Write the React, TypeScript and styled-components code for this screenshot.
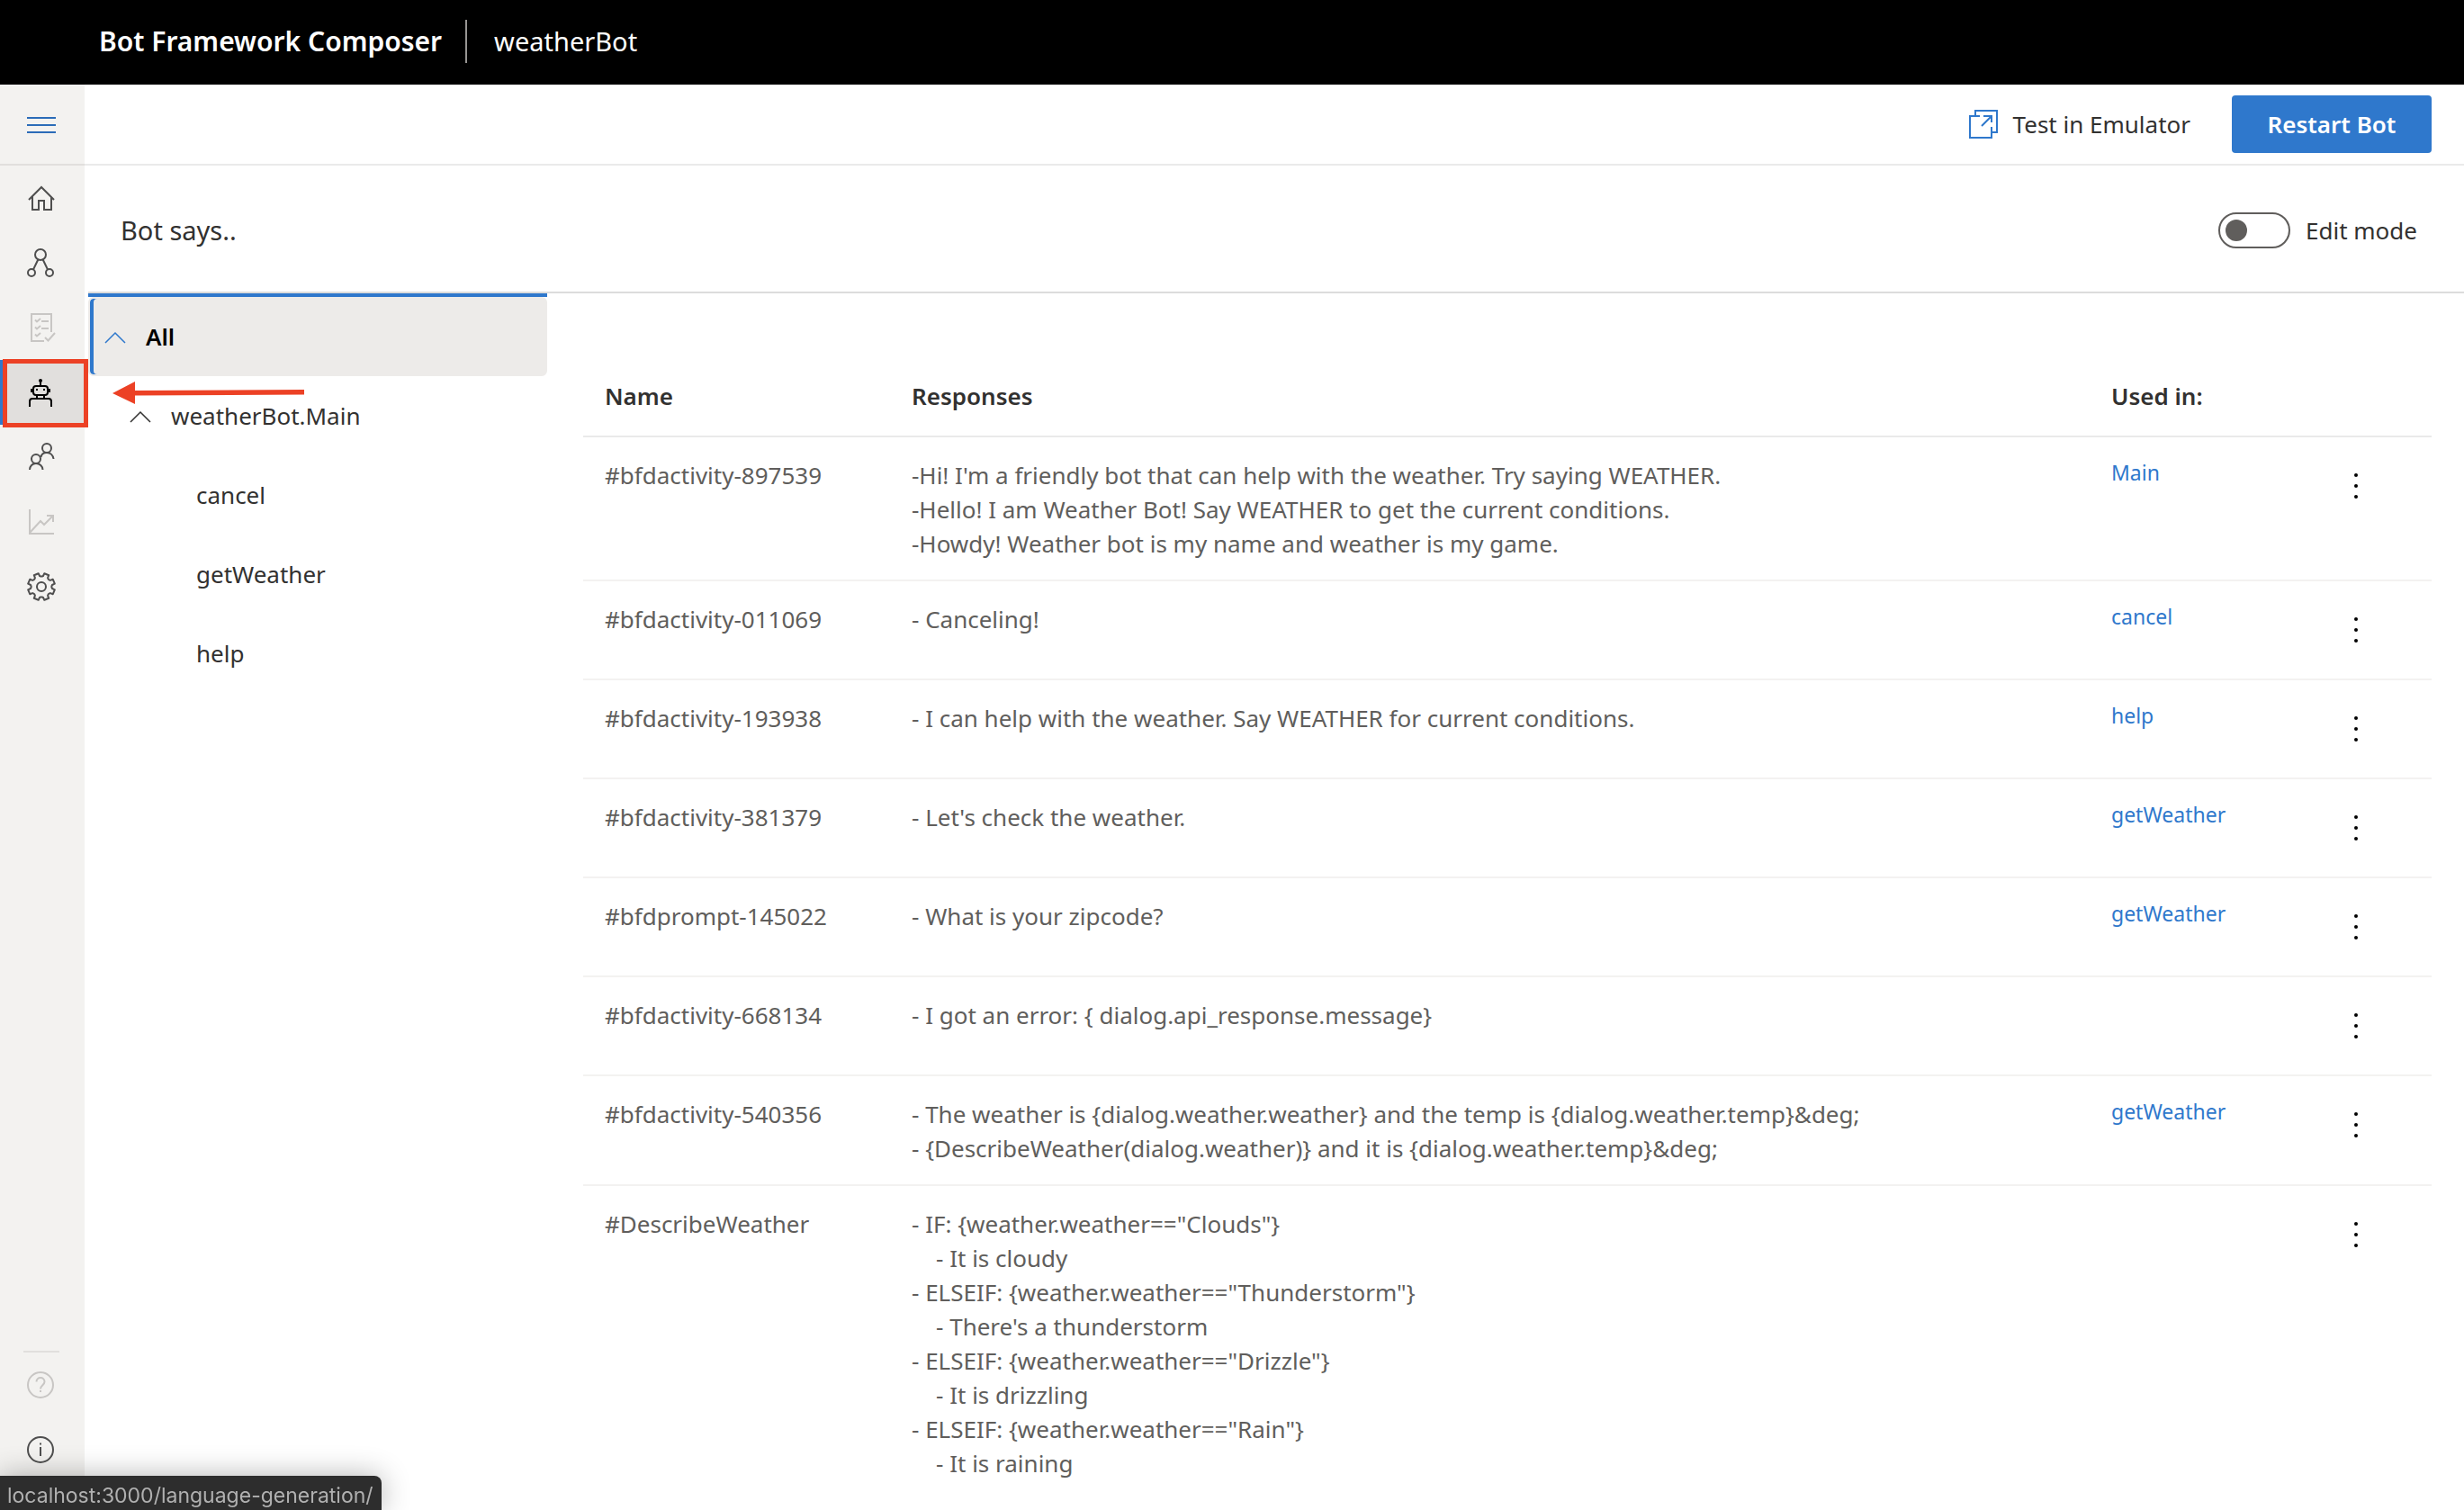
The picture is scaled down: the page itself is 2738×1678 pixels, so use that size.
import React, { useState } from "react";
import styled, { createGlobalStyle, css } from "styled-components";

const color = {
  blue: "#2f78cc",
  text: "#323130",
  muted: "#605e5c",
  disabled: "#c8c6c4",
  icon: "#4f4f4f",
  line: "#eaeaea",
  rail: "#f3f2f0",
  mark: "#ec4125",
};

const GlobalStyle = createGlobalStyle`
  * { box-sizing: border-box; }
  body {
    margin: 0;
    background: #fff;
    color: ${color.text};
    font-family: "Noto Sans", "Open Sans", sans-serif;
    font-size: 26px;
    line-height: 38px;
  }
  button { font: inherit; color: inherit; border: 0; background: none; padding: 0; cursor: pointer; }
  a { color: inherit; text-decoration: none; }
`;

const Page = styled.div`
  display: flex;
  flex-direction: column;
  height: 100vh;
  overflow: hidden;
`;

const TopBar = styled.header`
  flex: none;
  display: flex;
  align-items: center;
  height: 94px;
  padding: 0 0 2px 110px;
  background: #000;
  color: #fff;
  font-size: 29px;
`;

const Product = styled.span`
  font-size: 30px;
  font-weight: 600;
`;

const TopDivider = styled.span`
  width: 2px;
  height: 48px;
  margin: 0 30px 0 26px;
  background: #979593;
`;

const Body = styled.div`
  flex: 1;
  display: flex;
  min-height: 0;
`;

const Rail = styled.nav`
  position: relative;
  z-index: 1;
  flex: none;
  display: flex;
  flex-direction: column;
  width: 94px;
  padding-bottom: 31px;
  background: ${color.rail};
`;

const MenuButton = styled.button`
  flex: none;
  height: 90px;
  padding-left: 30px;
  border-bottom: 2px solid #e1dfdd;
  color: #2b6cb8;
  text-align: left;
`;

const RailGroup = styled.div`
  display: flex;
  flex-direction: column;
`;

const RailBottom = styled(RailGroup)`
  margin-top: auto;
`;

const RailRule = styled.hr`
  width: 40px;
  height: 2px;
  margin: 0 0 0 26px;
  border: 0;
  background: #e1dfdd;
`;

const RailLink = styled.a<{ $active?: boolean; $disabled?: boolean }>`
  position: relative;
  display: flex;
  align-items: center;
  height: 72px;
  padding-left: 30px;
  color: ${(p) => (p.$active ? "#000" : p.$disabled ? color.disabled : color.icon)};
  ${(p) =>
    p.$active &&
    css`
      background: #e1dfdd;
      box-shadow: inset 4px 0 0 ${color.blue};
    `}
`;

const Highlight = styled.span`
  position: absolute;
  top: -1px;
  left: 3px;
  width: 95px;
  height: 76px;
  border: 5px solid ${color.mark};
`;

const Pointer = styled.svg`
  position: absolute;
  top: 24px;
  left: 125px;
`;

const Icon = styled.svg`
  display: block;
  flex: none;
  fill: none;
  stroke: currentColor;
  stroke-width: 2;
`;

const Main = styled.main`
  flex: 1;
  display: flex;
  flex-direction: column;
  min-width: 0;
  padding-bottom: 23px;
`;

const Toolbar = styled.div`
  flex: none;
  display: flex;
  align-items: center;
  justify-content: flex-end;
  gap: 46px;
  height: 90px;
  padding-right: 36px;
  border-bottom: 2px solid ${color.line};
`;

const EmulatorButton = styled.button`
  display: flex;
  align-items: center;
  gap: 16px;
`;

const BlueIcon = styled(Icon)`
  color: ${color.blue};
`;

const PrimaryButton = styled.button`
  width: 222px;
  height: 64px;
  border-radius: 4px;
  background: ${color.blue};
  color: #fff;
  font-weight: 600;
`;

const TitleRow = styled.div`
  flex: none;
  display: flex;
  align-items: center;
  justify-content: space-between;
  height: 142px;
  margin-left: 4px;
  padding: 4px 52px 0 36px;
  border-bottom: 2px solid #dcdcdc;
`;

const Title = styled.h1`
  margin: 0;
  font-size: 29px;
  font-weight: 400;
`;

const ToggleLabel = styled.label`
  display: flex;
  align-items: center;
  gap: 17px;
`;

const Toggle = styled.input`
  appearance: none;
  display: flex;
  align-items: center;
  width: 80px;
  height: 40px;
  margin: 0;
  padding: 0 6px;
  border: 2px solid ${color.muted};
  border-radius: 20px;
  &::before {
    content: "";
    width: 24px;
    height: 24px;
    border-radius: 50%;
    background: ${color.muted};
  }
  &:checked { justify-content: flex-end; }
`;

const Split = styled.div`
  flex: 1;
  display: flex;
  min-height: 0;
`;

const Tree = styled.div`
  flex: none;
  width: 510px;
  margin-left: 4px;
  border-top: 4px solid ${color.blue};
`;

const TreeRow = styled.button<{ $level: number; $selected?: boolean }>`
  display: flex;
  align-items: center;
  gap: 22px;
  width: 100%;
  height: 88px;
  padding-left: ${(p) => 18 + p.$level * 28}px;
  text-align: left;
  ${(p) =>
    p.$selected &&
    css`
      border: 2px solid #edebe9;
      border-radius: 6px;
      padding-left: 16px;
      background: #edebe9;
      box-shadow: inset 4px 0 0 ${color.blue};
      font-weight: 600;
      color: #000;
    `}
`;

const ChevronSlot = styled.span<{ $blue?: boolean }>`
  flex: none;
  width: 24px;
  padding-top: 2px;
  color: ${(p) => (p.$blue ? color.blue : color.text)};
`;

const Content = styled.div`
  flex: 1;
  min-width: 0;
  margin: 0 36px 0 40px;
  overflow: auto;
  scrollbar-width: none;
`;

const Table = styled.table`
  width: 100%;
  margin-top: 70px;
  table-layout: fixed;
  border-collapse: separate;
  border-spacing: 0;
`;

const HeadCell = styled.th<{ $width?: number }>`
  width: ${(p) => (p.$width ? `${p.$width}px` : "auto")};
  height: 90px;
  padding: 0 24px;
  border-bottom: 2px solid ${color.line};
  text-align: left;
  font-weight: 600;
`;

const Cell = styled.td`
  height: 110px;
  padding: 23px 24px 21px;
  border-bottom: 2px solid #f3f2f1;
  vertical-align: top;
  color: ${color.muted};
  white-space: pre;
`;

const UsedCell = styled(Cell)`
  padding: 20px 24px;
  color: ${color.blue};
  font-size: 23px;
`;

const ActionCell = styled(Cell)`
  padding: 34px 24px 0;
`;

const MoreButton = styled.button`
  display: flex;
  align-items: center;
  justify-content: center;
  width: 40px;
  height: 40px;
  margin: 0 auto;
  color: #000;
`;

const LinkPreview = styled.div`
  position: fixed;
  left: 0;
  bottom: 0;
  z-index: 2;
  width: 424px;
  height: 38px;
  padding: 3px 8px 0;
  border-top-right-radius: 8px;
  background: #2d2d2d;
  box-shadow: 0 0 32px rgba(0, 0, 0, 0.3);
  color: #b0b0b0;
  font-family: Inter, Roboto, sans-serif;
  font-size: 23px;
  white-space: nowrap;
`;

const gearPath = (() => {
  const at = (radius: number, degrees: number) => {
    const a = (degrees * Math.PI) / 180;
    return `${(16 + radius * Math.cos(a)).toFixed(1)} ${(16 + radius * Math.sin(a)).toFixed(1)}`;
  };
  const points: string[] = [];
  for (let i = 0; i < 8; i++) {
    const c = 22.5 + i * 45;
    points.push(at(11.4, c - 19), at(12.2, c - 13), at(15.2, c - 10), at(15.2, c + 10), at(12.2, c + 13), at(11.4, c + 19));
  }
  return `M${points.join("L")}Z`;
})();

const icons = {
  menu: <path d="M0 9h32M0 17h32M0 25h32" />,
  home: <path d="M2 18 16 4l14 14M6 14.500V29h7V19h6v10h8V14.500" />,
  design: (
    <>
      <circle cx="15" cy="7" r="6" />
      <circle cx="5" cy="27" r="4" />
      <circle cx="25" cy="27" r="4" />
      <path d="M12.300 12.500 7 23.500M17.700 12.500 23 23.500" />
    </>
  ),
  notes: <path d="M27 21V1H5v30h14M20 27l3.500 3.500L31 22M9 7.500l2 2 4-3.500M9 15.500l2 2 4-3.500M9 23.500l2 2 4-3.500M16 9h8M16 17h8" />,
  bot: (
    <>
      <circle cx="15" cy="3" r="2" fill="currentColor" stroke="none" />
      <path d="M15 4v5M5 12v4M25 12v4M11 19v4M19 19v4M3 32v-6q0-3 3-3h18q3 0 3 3v6" />
      <rect x="7" y="9" width="16" height="10" rx="3" />
      <path d="M10 13h2M18 13h2" />
    </>
  ),
  users: (
    <>
      <circle cx="22" cy="6" r="5" />
      <circle cx="10" cy="18" r="5" />
      <path d="M3 30c0-4 3-7 7-7s7.500 3 7.500 7M15.500 16c.5-3 3-5 6.500-5 4 0 7 3 7.500 7" />
    </>
  ),
  chart: <path d="M3 2v27h27M3 28l12-13 4 4 10-10M22 9h7v7" />,
  gear: (
    <>
      <path d={gearPath} strokeLinejoin="round" />
      <circle cx="16" cy="16" r="5" />
    </>
  ),
  help: (
    <>
      <circle cx="15" cy="16" r="14" />
      <path d="M10.500 12.500c0-6 9-6 9 0 0 3.500-4.500 4-4.500 8M15 22v2" />
    </>
  ),
  info: (
    <>
      <circle cx="15" cy="16" r="14" />
      <path d="M15 8.500v2M15 13v10" />
    </>
  ),
};

type IconName = keyof typeof icons;

const Glyph = ({ name }: { name: IconName }) => (
  <Icon width="32" height="32" viewBox="0 0 32 32" aria-hidden="true">
    {icons[name]}
  </Icon>
);

const Chevron = () => (
  <Icon width="24" height="14" viewBox="0 0 24 14" aria-hidden="true">
    <path d="M1 13 12 2l11 11" strokeWidth="1.5" />
  </Icon>
);

const navItems: { icon: IconName; label: string; active?: boolean; disabled?: boolean }[] = [
  { icon: "home", label: "Home" },
  { icon: "design", label: "Design flow" },
  { icon: "notes", label: "Test cases", disabled: true },
  { icon: "bot", label: "Bot says", active: true },
  { icon: "users", label: "User says" },
  { icon: "chart", label: "Analytics", disabled: true },
  { icon: "gear", label: "Settings" },
];

const treeItems = [
  { label: "All", level: 0, open: true, selected: true },
  { label: "weatherBot.Main", level: 1, open: true },
  { label: "cancel", level: 2 },
  { label: "getWeather", level: 2 },
  { label: "help", level: 2 },
];

const rows = [
  {
    name: "#bfdactivity-897539",
    text: `-Hi! I'm a friendly bot that can help with the weather. Try saying WEATHER.
-Hello! I am Weather Bot! Say WEATHER to get the current conditions.
-Howdy! Weather bot is my name and weather is my game.`,
    used: "Main",
  },
  { name: "#bfdactivity-011069", text: "- Canceling!", used: "cancel" },
  { name: "#bfdactivity-193938", text: "- I can help with the weather. Say WEATHER for current conditions.", used: "help" },
  { name: "#bfdactivity-381379", text: "- Let's check the weather.", used: "getWeather" },
  { name: "#bfdprompt-145022", text: "- What is your zipcode?", used: "getWeather" },
  { name: "#bfdactivity-668134", text: "- I got an error: { dialog.api_response.message}", used: "" },
  {
    name: "#bfdactivity-540356",
    text: `- The weather is {dialog.weather.weather} and the temp is {dialog.weather.temp}&deg;
- {DescribeWeather(dialog.weather)} and it is {dialog.weather.temp}&deg;`,
    used: "getWeather",
  },
  {
    name: "#DescribeWeather",
    text: `- IF: {weather.weather=="Clouds"}
    - It is cloudy
- ELSEIF: {weather.weather=="Thunderstorm"}
    - There's a thunderstorm
- ELSEIF: {weather.weather=="Drizzle"}
    - It is drizzling
- ELSEIF: {weather.weather=="Rain"}
    - It is raining
- ELSEIF: {weather.weather=="Snow"}`,
    used: "",
  },
];

export default function App() {
  const [editMode, setEditMode] = useState(false);
  return (
    <Page>
      <GlobalStyle />
      <TopBar>
        <Product>Bot Framework Composer</Product>
        <TopDivider />
        <span>weatherBot</span>
      </TopBar>
      <Body>
        <Rail>
          <MenuButton aria-label="Toggle menu">
            <Glyph name="menu" />
          </MenuButton>
          <RailGroup>
            {navItems.map((item) => (
              <RailLink key={item.icon} href="#" aria-label={item.label} $active={item.active} $disabled={item.disabled}>
                <Glyph name={item.icon} />
                {item.active && (
                  <>
                    <Highlight />
                    <Pointer width="214" height="26" viewBox="0 0 214 26" fill={color.mark} aria-hidden="true">
                      <path d="M0 13 25 0v10l188-1v5.500L25 15.500V25Z" />
                    </Pointer>
                  </>
                )}
              </RailLink>
            ))}
          </RailGroup>
          <RailBottom>
            <RailRule />
            <RailLink href="#" aria-label="Help" $disabled>
              <Glyph name="help" />
            </RailLink>
            <RailLink href="#" aria-label="About">
              <Glyph name="info" />
            </RailLink>
          </RailBottom>
        </Rail>
        <Main>
          <Toolbar>
            <EmulatorButton>
              <BlueIcon width="34" height="32" viewBox="0 0 34 32" aria-hidden="true">
                <path d="M8 6V1h24v24h-5M13 7H2v24h24V19M26 14V7h-9M26 7 15 18" />
              </BlueIcon>
              Test in Emulator
            </EmulatorButton>
            <PrimaryButton>Restart Bot</PrimaryButton>
          </Toolbar>
          <TitleRow>
            <Title>Bot says..</Title>
            <ToggleLabel>
              <Toggle type="checkbox" role="switch" checked={editMode} onChange={(e) => setEditMode(e.target.checked)} />
              Edit mode
            </ToggleLabel>
          </TitleRow>
          <Split>
            <Tree>
              {treeItems.map((item) => (
                <TreeRow key={item.label} $level={item.level} $selected={item.selected}>
                  <ChevronSlot $blue={item.selected}>{item.open && <Chevron />}</ChevronSlot>
                  {item.label}
                </TreeRow>
              ))}
            </Tree>
            <Content>
              <Table>
                <thead>
                  <tr>
                    <HeadCell $width={341}>Name</HeadCell>
                    <HeadCell>Responses</HeadCell>
                    <HeadCell $width={212}>Used in:</HeadCell>
                    <HeadCell $width={168} aria-label="Actions" />
                  </tr>
                </thead>
                <tbody>
                  {rows.map((row) => (
                    <tr key={row.name}>
                      <Cell>{row.name}</Cell>
                      <Cell>{row.text}</Cell>
                      <UsedCell>{row.used && <a href="#">{row.used}</a>}</UsedCell>
                      <ActionCell>
                        <MoreButton aria-label="More actions">
                          <svg width="4" height="28" viewBox="0 0 4 28" aria-hidden="true">
                            <circle cx="2" cy="2" r="2" />
                            <circle cx="2" cy="14" r="2" />
                            <circle cx="2" cy="26" r="2" />
                          </svg>
                        </MoreButton>
                      </ActionCell>
                    </tr>
                  ))}
                </tbody>
              </Table>
            </Content>
          </Split>
        </Main>
      </Body>
      <LinkPreview>localhost:3000/language-generation/</LinkPreview>
    </Page>
  );
}
